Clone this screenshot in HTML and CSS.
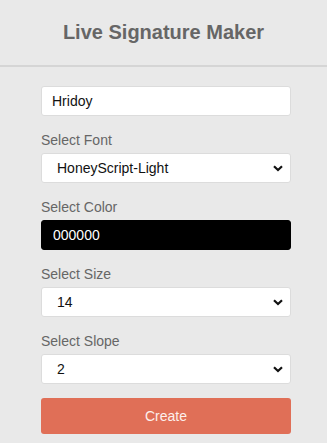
FILE: index.html
```html
<!DOCTYPE html>
<html lang="en">
<head>
  <meta charset="UTF-8">
  <title>Live Signature Maker</title>
  <link rel="stylesheet" href="styles.css">
</head>
<body>
  <div class="header">
    <h1>Live Signature Maker</h1>
  </div>

  <div class="form">
    <input type="text" class="field" id="name" value="Hridoy">

    <label for="font" class="label">Select Font</label>
    <div class="select-wrap">
      <select id="font" class="field">
        <option>HoneyScript-Light</option>
      </select>
      <svg class="chevron" width="10" height="7" viewBox="0 0 10 7"><path d="M1 1.2 L5 5 L9 1.2" fill="none" stroke="#111" stroke-width="2.2"/></svg>
    </div>

    <label for="color" class="label">Select Color</label>
    <input type="text" class="field color" id="color" value="000000">

    <label for="size" class="label">Select Size</label>
    <div class="select-wrap">
      <select id="size" class="field">
        <option>14</option>
      </select>
      <svg class="chevron" width="10" height="7" viewBox="0 0 10 7"><path d="M1 1.2 L5 5 L9 1.2" fill="none" stroke="#111" stroke-width="2.2"/></svg>
    </div>

    <label for="slope" class="label">Select Slope</label>
    <div class="select-wrap">
      <select id="slope" class="field">
        <option>2</option>
      </select>
      <svg class="chevron" width="10" height="7" viewBox="0 0 10 7"><path d="M1 1.2 L5 5 L9 1.2" fill="none" stroke="#111" stroke-width="2.2"/></svg>
    </div>

    <button class="create">Create</button>
  </div>
</body>
</html>
```

FILE: styles.css
```css
body {
  margin: 0;
  padding: 0;
  font-family: 'Liberation Sans', Arial, sans-serif;
  background: #e9e9e9;
}

.header {
  height: 65px;
  display: flex;
  justify-content: center;
  align-items: center;
  border-bottom: 2px solid #d5d5d5;
}

h1 {
  margin: 0;
  font-size: 20px;
  font-weight: bold;
  color: #666;
}

.form {
  padding: 19px 0 0 41px;
  width: 250px;
}

.field {
  display: block;
  box-sizing: border-box;
  width: 100%;
  height: 30px;
  margin: 0 0 16px 0;
  padding: 0 10px;
  font-family: 'Liberation Sans', Arial, sans-serif;
  font-size: 14px;
  color: #111;
  background: #fff;
  border: 1px solid #dcdcdc;
  border-radius: 3px;
  outline: none;
}

select.field {
  appearance: none;
  -webkit-appearance: none;
  padding-left: 15px;
}

.select-wrap {
  position: relative;
}

.chevron {
  position: absolute;
  right: 8px;
  top: 12px;
  pointer-events: none;
}

.color {
  background: #000;
  color: #fff;
  border-color: #000;
  padding-left: 11px;
}

.label {
  display: block;
  font-size: 14px;
  line-height: 17px;
  margin-bottom: 4px;
  color: #666;
}

.create {
  display: block;
  width: 100%;
  height: 36px;
  margin-top: -2px;
  border: none;
  border-radius: 3px;
  background: #e06f57;
  color: #fdf0ec;
  font-family: 'Liberation Sans', Arial, sans-serif;
  font-size: 14px;
  cursor: pointer;
}
```
